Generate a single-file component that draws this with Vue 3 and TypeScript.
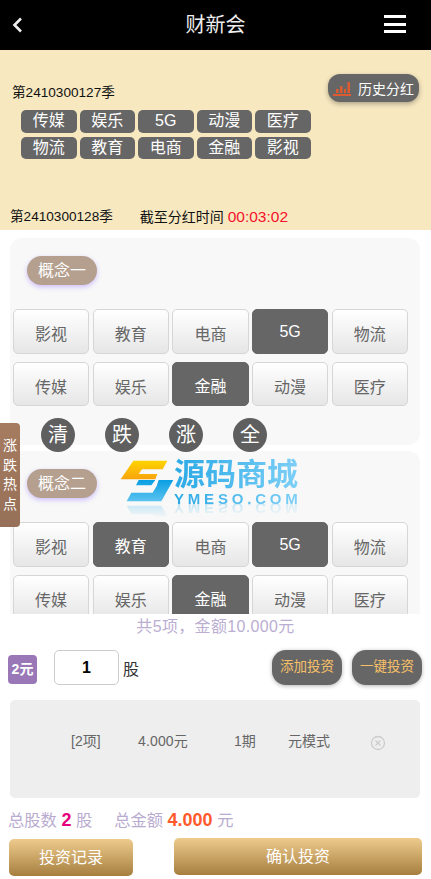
<template>
  <div class="page">
    <header class="topbar">
      <svg class="back" width="12" height="18" viewBox="0 0 12 18"><path d="M10 2.500 3.500 9l6.500 6.500" fill="none" stroke="#eee" stroke-width="2.600" /></svg>
      <div class="title">财新会</div>
      <div class="burger"><i /><i /><i /></div>
    </header>

    <section class="banner">
      <div class="banner-top">
        <div class="season">第2410300127季</div>
        <div class="history">
          <svg width="18" height="15" viewBox="0 0 18 15">
            <path d="M3 8h2.500v4H3zM7 5h2.500v7H7zM11 8h2v4h-2zM14.500 1H17v11h-2.500zM0 13h18v2H0z" fill="#de5a30" />
          </svg>
          <span>历史分红</span>
        </div>
      </div>
      <div class="tags">
        <span v-for="t in lastResult" :key="t" class="tag">{{ t }}</span>
      </div>
      <div class="banner-bottom">
        <span>第2410300128季</span>
        <span class="deadline">截至分红时间 <em>00:03:02</em></span>
      </div>
    </section>

    <main class="board">
      <div v-for="g in groups" :key="g.name" class="card" :class="{ first: g.tools }">
        <div class="pill">{{ g.name }}</div>
        <div class="grid">
          <div v-for="b in g.items" :key="b" class="opt" :class="{ on: g.active.includes(b) }">{{ b }}</div>
        </div>
        <div v-if="g.tools" class="tools">
          <span v-for="c in tools" :key="c" class="tool">{{ c }}</span>
        </div>
      </div>
    </main>

    <footer class="bottom">
      <div class="summary">共5项，金额10.000元</div>
      <div class="entry">
        <span class="unit">2元</span>
        <div class="qty">1</div>
        <span class="gu">股</span>
        <div class="entry-btns">
          <div class="dark-btn">添加投资</div>
          <div class="dark-btn">一键投资</div>
        </div>
      </div>
      <div class="slip">
        <div class="slip-row">
          <span class="c1">[2项]</span>
          <span class="c2">4.000元</span>
          <span class="c3">1期</span>
          <span class="c4">元模式</span>
          <svg class="del" width="16" height="16" viewBox="0 0 16 16">
            <circle cx="8" cy="8" r="6.500" fill="none" stroke="#ccc" stroke-width="1.300" />
            <path d="m5.500 5.500 5 5m0-5-5 5" stroke="#ccc" stroke-width="1.200" />
          </svg>
        </div>
      </div>
      <div class="totals">
        <span>总股数 <b class="pink">2</b> 股</span>
        <span>总金额 <b class="orange">4.000</b> 元</span>
      </div>
      <div class="actions">
        <div class="gold record">投资记录</div>
        <div class="gold confirm">确认投资</div>
      </div>
    </footer>

    <div class="side-tab"><span>涨</span><span>跌</span><span>热</span><span>点</span></div>

    <div class="watermark">
      <svg width="60" height="56" viewBox="0 0 180 168">
        <defs>
          <linearGradient id="wy" x1="0" y1="0" x2="0" y2="1"><stop offset="0" stop-color="#ffd400" /><stop offset="1" stop-color="#f7a30c" /></linearGradient>
          <linearGradient id="wb" x1="0" y1="0" x2="0" y2="1"><stop offset="0" stop-color="#0a9fe2" /><stop offset="1" stop-color="#5cc3f0" /></linearGradient>
        </defs>
        <path d="M46 14H148L134 40H72L62 54H118L112 70H8Z" fill="url(#wy)" />
        <path d="M62 72H112L100 88H54Z M122 72H166L130 136H26L40 110H104L116 90Z" fill="url(#wb)" />
      </svg>
      <div class="wm-text">
        <div class="wm-cn">源码商城</div>
        <div class="wm-en">YMESO.COM</div>
      </div>
    </div>
  </div>
</template>

<script setup lang="ts">
const lastResult = ['传媒', '娱乐', '5G', '动漫', '医疗', '物流', '教育', '电商', '金融', '影视']
const tools = ['清', '跌', '涨', '全']

const groups = [
  {
    name: '概念一',
    items: ['影视', '教育', '电商', '5G', '物流', '传媒', '娱乐', '金融', '动漫', '医疗'],
    active: ['5G', '金融'],
    tools: true
  },
  {
    name: '概念二',
    items: ['影视', '教育', '电商', '5G', '物流', '传媒', '娱乐', '金融', '动漫', '医疗'],
    active: ['教育', '5G', '金融'],
    tools: false
  }
]
</script>

<style>
html, body { margin: 0; background: #fff; }
</style>

<style scoped>
.page {
  position: relative;
  width: 431px;
  height: 879px;
  overflow: hidden;
  display: flex;
  flex-direction: column;
  font-family: "Liberation Sans", "Noto Sans CJK SC", sans-serif;
  background: #fff;
}
.topbar { height: 50px; flex: none; background: #000; display: grid; grid-template-columns: 1fr auto 1fr; align-items: center; padding: 0 25px 0 11px; }
.title { color: #eee; font-size: 20px; position: relative; top: -2px; left: 7px; }
.burger { width: 22px; display: flex; flex-direction: column; gap: 4.500px; justify-self: end; position: relative; top: -1px; }
.burger i { display: block; height: 3px; background: #fff; }

.banner { height: 180px; flex: none; background: #f7e8c0; display: flex; flex-direction: column; color: #111; font-size: 13.600px; }
.banner-top { display: flex; justify-content: space-between; align-items: flex-end; padding: 24px 12px 0 12px; }
.season { line-height: 20px; position: relative; top: 1px; }
.history { height: 28px; width: 91px; box-sizing: border-box; padding-left: 5px; display: flex; align-items: center; gap: 7px; border-radius: 12px; background: #666; color: #fff; font-size: 14px; box-shadow: 0 2px 5px rgba(0, 0, 0, .3); }
.tags { display: grid; grid-template-columns: repeat(5, 55.500px); grid-auto-rows: 22.500px; gap: 4px 3px; margin: 8px 0 0 21px; }
.tag { background: #666; color: #fff; border-radius: 5px; font-size: 16px; line-height: 22px; text-align: center; }
.banner-bottom { margin-top: auto; padding: 0 0 3px 10px; display: flex; gap: 27px; line-height: 20px; }
.deadline { font-size: 14px; }
.deadline em { font-style: normal; color: #f5102c; font-size: 15.500px; }

.board { flex: 1; min-height: 0; overflow: hidden; padding: 8px 11px 0 10px; }
.card { background: #f8f8f8; border-radius: 12px; padding: 18px 0 20px 3px; margin-bottom: 6px; }
.card.first { padding-bottom: 0; height: 207px; box-sizing: border-box; }
.pill { width: 70px; height: 29px; margin-left: 14px; border-radius: 15px; background: #b5a08f; color: #fff; font-size: 16px; line-height: 29px; text-align: center; box-shadow: 0 2px 5px rgba(150, 120, 255, .45); }
.grid { display: grid; grid-template-columns: repeat(5, 76.250px); grid-auto-rows: 44.500px; gap: 8px 3.400px; margin-top: 24px; }
.card:not(.first) .grid { row-gap: 8.500px; }
.opt { box-sizing: border-box; padding-top: 4px; border: 1px solid #d6d6d6; border-radius: 5px; background: linear-gradient(#fff, #e6e6e6); color: #666; font-size: 16px; display: flex; align-items: center; justify-content: center; }
.opt.on { padding-top: 2px; background: #666; border-color: #666; color: #fff; }
.tools { display: flex; gap: 30px; margin: 12px 0 0 28px; position: relative; z-index: 1; }
.tool { width: 34px; height: 34px; border-radius: 50%; background: #5f5f5f; color: #fff; font-size: 20px; line-height: 34px; text-align: center; }

.bottom { height: 265px; flex: none; background: #fff; display: flex; flex-direction: column; position: relative; }
.summary { height: 24px; line-height: 25px; text-align: center; color: #bbaed2; font-size: 16px; letter-spacing: .35px; }
.entry { display: flex; align-items: center; height: 35px; margin-top: 12px; padding: 0 9px 0 8px; }
.unit { width: 29px; height: 29px; margin-top: 4px; border-radius: 4px; background: #9a78b8; color: #fff; font-size: 14px; font-weight: 700; line-height: 29px; text-align: center; }
.qty { width: 65px; height: 35px; box-sizing: border-box; margin-left: 17px; border: 1px solid #ccc; border-radius: 5px; font-size: 16px; font-weight: 700; color: #000; line-height: 33px; text-align: center; }
.gu { margin-left: 4px; font-size: 16px; color: #333; }
.entry-btns { margin-left: auto; display: flex; gap: 10px; }
.dark-btn { width: 70px; height: 35px; border-radius: 14px; background: #666; color: #f7c068; font-size: 13.500px; line-height: 33px; text-align: center; box-shadow: 0 1px 4px rgba(0, 0, 0, .3); }
.slip { height: 98px; margin: 15px 11px 0 10px; background: #eee; border-radius: 5px; flex: none; }
.slip-row { position: relative; height: 80px; display: flex; align-items: center; color: #666; font-size: 14px; }
.c1 { margin-left: 61px; width: 67px; }
.c2 { width: 96px; letter-spacing: .15px; }
.c3 { width: 54px; }
.c4 { width: 82px; }
.del { flex: none; margin-top: 6px; }
.totals { display: flex; gap: 22px; margin: 11px 0 0 8px; color: #b9abcf; font-size: 16.300px; line-height: 22px; }
.pink { color: #e6007e; font-size: 18px; }
.orange { color: #ff5a2c; font-size: 18px; }
.actions { display: flex; justify-content: space-between; padding: 0 9px; margin-top: 7px; }
.gold { height: 37px; border-radius: 5px; background: linear-gradient(#eecb8d, #a67f3f); color: #fff; font-size: 16px; line-height: 37px; text-align: center; }
.record { width: 124px; position: relative; top: 1px; }
.confirm { width: 248px; }

.side-tab { position: absolute; left: 0; top: 423px; width: 20px; height: 104px; box-sizing: border-box; padding-top: 15px; border-radius: 0 4px 4px 0; background: linear-gradient(#a67c60, #967058); color: #fff; font-size: 14px; display: flex; flex-direction: column; align-items: center; gap: 4.500px; line-height: 15px; }
.watermark { position: absolute; left: 118px; top: 456px; display: flex; pointer-events: none; -webkit-box-reflect: below -17px linear-gradient(transparent 60%, rgba(255, 255, 255, .5)); }
.wm-text { margin-left: -4px; padding-top: 2px; }
.wm-cn { font-size: 31px; line-height: 33px; font-weight: 700; color: transparent; background: linear-gradient(90deg, #29a9e6, #7fd0f7); -webkit-background-clip: text; background-clip: text; }
.wm-en { font-size: 15px; line-height: 15px; letter-spacing: 3.800px; font-weight: 700; color: transparent; background: linear-gradient(90deg, #29a9e6, #7fd0f7); -webkit-background-clip: text; background-clip: text; }
</style>
